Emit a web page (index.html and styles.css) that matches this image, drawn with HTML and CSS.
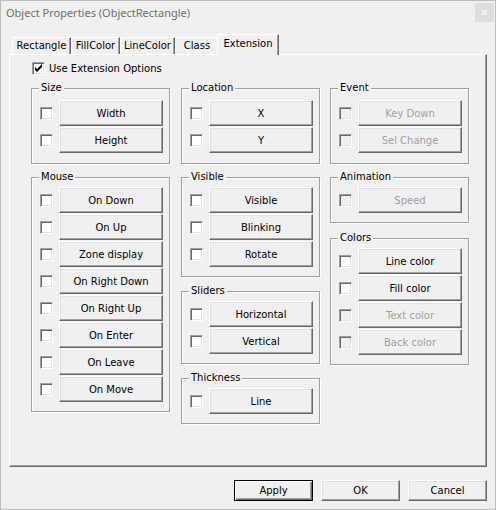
FILE: index.html
```html
<!DOCTYPE html>
<html>
<head>
<meta charset="utf-8">
<title>Object Properties</title>
<link rel="stylesheet" href="styles.css">
</head>
<body>
<div class="window">
  <div class="titlebar">
    <span class="title">Object Properties (ObjectRectangle)</span>
    <span class="close"><svg width="19" height="19" viewBox="0 0 19 19"><path d="M7 7L12 12M12 7L7 12" stroke="#f7f7f7" stroke-width="1.3" fill="none"/></svg></span>
  </div>
  <div class="tabs">
    <div class="tab t-rect">Rectangle</div>
    <div class="tab t-fill">FillColor</div>
    <div class="tab t-line">LineColor</div>
    <div class="tab t-class">Class</div>
    <div class="tab selected">Extension</div>
  </div>
  <div class="panel">
    <div class="use"><span class="cb"><svg width="11" height="11" viewBox="0 0 11 11"><path d="M2 4L2 7L4 9L9 4L9 1L4 6Z" fill="#000"/></svg></span><span>Use Extension Options</span></div>
    <div class="columns">
      <div class="col">
        <div class="group g-top">
          <div class="gtitle">Size</div>
          <div class="rows">
            <div class="row"><span class="cb"></span><span class="btn">Width</span></div>
            <div class="row"><span class="cb"></span><span class="btn">Height</span></div>
          </div>
        </div>
        <div class="group">
          <div class="gtitle">Mouse</div>
          <div class="rows">
            <div class="row"><span class="cb"></span><span class="btn">On Down</span></div>
            <div class="row"><span class="cb"></span><span class="btn">On Up</span></div>
            <div class="row"><span class="cb"></span><span class="btn">Zone display</span></div>
            <div class="row"><span class="cb"></span><span class="btn">On Right Down</span></div>
            <div class="row"><span class="cb"></span><span class="btn">On Right Up</span></div>
            <div class="row"><span class="cb"></span><span class="btn">On Enter</span></div>
            <div class="row"><span class="cb"></span><span class="btn">On Leave</span></div>
            <div class="row"><span class="cb"></span><span class="btn">On Move</span></div>
          </div>
        </div>
      </div>
      <div class="col">
        <div class="group g-top">
          <div class="gtitle">Location</div>
          <div class="rows">
            <div class="row"><span class="cb"></span><span class="btn">X</span></div>
            <div class="row"><span class="cb"></span><span class="btn">Y</span></div>
          </div>
        </div>
        <div class="group">
          <div class="gtitle">Visible</div>
          <div class="rows">
            <div class="row"><span class="cb"></span><span class="btn">Visible</span></div>
            <div class="row"><span class="cb"></span><span class="btn">Blinking</span></div>
            <div class="row"><span class="cb"></span><span class="btn">Rotate</span></div>
          </div>
        </div>
        <div class="group">
          <div class="gtitle">Sliders</div>
          <div class="rows">
            <div class="row"><span class="cb"></span><span class="btn">Horizontal</span></div>
            <div class="row"><span class="cb"></span><span class="btn">Vertical</span></div>
          </div>
        </div>
        <div class="group">
          <div class="gtitle">Thickness</div>
          <div class="rows">
            <div class="row"><span class="cb"></span><span class="btn">Line</span></div>
          </div>
        </div>
      </div>
      <div class="col">
        <div class="group g-top">
          <div class="gtitle">Event</div>
          <div class="rows">
            <div class="row"><span class="cb dis"></span><span class="btn dis">Key Down</span></div>
            <div class="row"><span class="cb dis"></span><span class="btn dis">Sel Change</span></div>
          </div>
        </div>
        <div class="group">
          <div class="gtitle">Animation</div>
          <div class="rows">
            <div class="row"><span class="cb dis"></span><span class="btn dis">Speed</span></div>
          </div>
        </div>
        <div class="group g-colors">
          <div class="gtitle">Colors</div>
          <div class="rows">
            <div class="row"><span class="cb"></span><span class="btn">Line color</span></div>
            <div class="row"><span class="cb"></span><span class="btn">Fill color</span></div>
            <div class="row"><span class="cb dis"></span><span class="btn dis">Text color</span></div>
            <div class="row"><span class="cb dis"></span><span class="btn dis">Back color</span></div>
          </div>
        </div>
      </div>
    </div>
  </div>
  <div class="footer">
    <span class="dbtn default">Apply</span>
    <span class="dbtn">OK</span>
    <span class="dbtn">Cancel</span>
  </div>
</div>
</body>
</html>
```
FILE: styles.css
```css
* { box-sizing: border-box; }
html, body { margin: 0; padding: 0; background: #f0f0f0; }
body {
  width: 496px;
  height: 510px;
  overflow: hidden;
  font-family: "DejaVu Sans", sans-serif;
  font-size: 10px;
  color: #000;
}
.window {
  width: 496px;
  height: 510px;
  border: 1px solid #bdbdbd;
  background: #f0f0f0;
  display: flex;
  flex-direction: column;
}
.titlebar {
  height: 27px;
  display: flex;
  align-items: flex-start;
  flex: none;
}
.title {
  font-family: "Noto Sans", sans-serif;
  font-size: 11px;
  line-height: 16px;
  color: #6f6f6f;
  padding: 4px 0 0 5px;
}
.close {
  margin: 2px 1px 0 auto;
  width: 19px;
  height: 19px;
  background: #dedede;
  display: flex;
}
.tabs {
  display: flex;
  align-items: flex-end;
  height: 20px;
  margin-top: 6px;
  padding-left: 11px;
  flex: none;
}
.tab {
  height: 17px;
  border-style: solid;
  border-width: 1px 1px 0 1px;
  border-color: #fff #696969 transparent #fff;
  box-shadow: inset -1px 0 0 #a0a0a0;
  text-align: center;
  line-height: 12px;
  padding-top: 2px;
  white-space: nowrap;
}
.t-rect { width: 59px; }
.t-fill { width: 49px; }
.t-line { width: 55px; }
.t-class { width: 44px; }
.tab.selected {
  width: 62px;
  height: 21px;
  margin-left: -2px;
  margin-bottom: -1px;
  padding-top: 3px;
  position: relative;
  z-index: 1;
  background: #f0f0f0;
}
.panel {
  margin-left: 8px;
  width: 478px;
  height: 413px;
  flex: none;
  border: 1px solid;
  border-color: #fff #696969 #696969 #fff;
  box-shadow: inset -1px -1px 0 #a0a0a0;
  padding: 7px 0 0 21px;
}
.use {
  display: flex;
  align-items: center;
  height: 13px;
  margin-left: 1px;
  line-height: 12px;
}
.use .cb { margin-right: 4px; }
.columns {
  display: grid;
  grid-template-columns: 150px 149px 139px;
  margin-top: 13px;
  align-items: start;
}
.group {
  width: 139px;
  border: 1px solid #a0a0a0;
  box-shadow: 1px 1px 0 #fff, inset 1px 1px 0 #fff;
  padding: 0 6px 9px 8px;
}
.group + .group { margin-top: 14px; }
.g-top + .group { margin-top: 13px; }
.group.g-colors { margin-top: 15px; }
.group.g-top { padding-bottom: 10px; }
.gtitle {
  margin: -7px 0 0 -1px;
  height: 12px;
  line-height: 12px;
  padding: 0 2px;
  background: #f0f0f0;
  width: max-content;
}
.rows {
  margin-top: 4px;
  display: flex;
  flex-direction: column;
  gap: 1px;
}
.g-top .rows { margin-top: 6px; }
.row {
  display: flex;
  align-items: center;
  height: 26px;
}
.cb {
  flex: none;
  width: 13px;
  height: 13px;
  border: 1px solid;
  border-color: #a0a0a0 #fff #fff #a0a0a0;
  box-shadow: inset 1px 1px 0 #696969, inset -1px -1px 0 #e3e3e3;
  background: #fff;
  display: flex;
}
.cb.dis { background: #f0f0f0; }
.btn {
  flex: none;
  margin-left: 6px;
  width: 104px;
  height: 26px;
  display: flex;
  align-items: center;
  justify-content: center;
  border: 1px solid;
  border-color: #fff #696969 #696969 #fff;
  box-shadow: inset -1px -1px 0 #a0a0a0, inset 1px 1px 0 #e3e3e3;
  white-space: nowrap;
}
.btn.dis { color: #a0a0a0; }
.footer {
  display: flex;
  justify-content: flex-end;
  gap: 8px;
  padding-right: 8px;
  margin-top: 13px;
  flex: none;
}
.dbtn {
  width: 79px;
  height: 21px;
  display: flex;
  align-items: center;
  justify-content: center;
  border: 1px solid;
  border-color: #fff #696969 #696969 #fff;
  box-shadow: inset -1px -1px 0 #a0a0a0, inset 1px 1px 0 #e3e3e3;
}
.dbtn.default {
  border-color: #000;
  box-shadow: inset 1px 1px 0 #fff, inset -1px -1px 0 #696969, inset -2px -2px 0 #a0a0a0;
}
```
